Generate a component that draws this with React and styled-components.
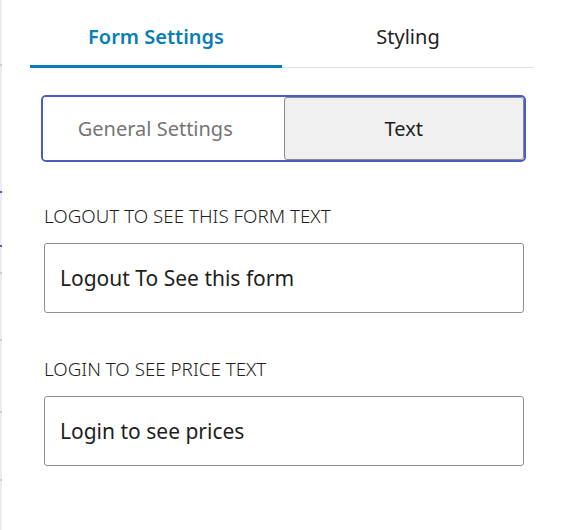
import React, { useState } from "react";
import styled, { createGlobalStyle } from "styled-components";

const Global = createGlobalStyle`
  html, body { margin: 0; padding: 0; background: #fff; }
  body { font-family: "Noto Sans", "Open Sans", sans-serif; color: #1e1e1e; }
`;

const Page = styled.div`
  display: flex;
  width: 561px;
  height: 530px;
  overflow: hidden;
`;

const Rail = styled.div`
  width: 2px;
  flex: none;
  background: #ececec;
  display: flex;
  flex-direction: column;
`;

const Tick = styled.span`
  display: block;
  height: 2px;
  margin-top: ${(p) => p.$gap}px;
  background: ${(p) => (p.$accent ? "#5b55c9" : "#d0d0d0")};
`;

const Panel = styled.div`
  width: 504px;
  margin-left: 28px;
  display: flex;
  flex-direction: column;
`;

const Tabs = styled.div`
  display: grid;
  grid-template-columns: 1fr 1fr;
  border-bottom: 1px solid #e2e2e2;
`;

const Tab = styled.button`
  all: unset;
  height: 68px;
  padding-top: 8px;
  box-sizing: border-box;
  text-align: center;
  font-size: 20px;
  font-weight: ${(p) => (p.$active ? 600 : 400)};
  color: ${(p) => (p.$active ? "#0a7db5" : "#222")};
  border-bottom: 3px solid ${(p) => (p.$active ? "#0a7db5" : "transparent")};
  margin-bottom: -1px;
  cursor: pointer;
`;

const Body = styled.div`
  padding: 27px 8px 0 11px;
  display: flex;
  flex-direction: column;
`;

const Segmented = styled.div`
  display: grid;
  grid-template-columns: 1fr 1fr;
  border: 2px solid #4a5cc4;
  border-radius: 5px;
  height: 67px;
  box-sizing: border-box;
  overflow: hidden;
  margin-bottom: 44px;
`;

const Segment = styled.button`
  all: unset;
  display: flex;
  align-items: center;
  justify-content: center;
  padding-right: ${(p) => (p.$active ? 0 : 16)}px;
  font-size: 20px;
  color: ${(p) => (p.$active ? "#1e1e1e" : "#757575")};
  background: ${(p) => (p.$active ? "#f0f0f0" : "#fff")};
  border: 1px solid ${(p) => (p.$active ? "#8a8a8a" : "transparent")};
  border-radius: ${(p) => (p.$active ? "3px" : "0")};
  cursor: pointer;
`;

const Field = styled.label`
  display: flex;
  flex-direction: column;
  padding: 0 2px 0 3px;
  margin-bottom: 46px;
`;

const Label = styled.span`
  font-size: 18.8px;
  font-weight: 300;
  text-transform: uppercase;
  color: #1e1e1e;
  line-height: 20px;
  margin-bottom: 17px;
`;

const Input = styled.input`
  box-sizing: border-box;
  height: 70px;
  width: 100%;
  border: 1px solid #8c8f94;
  border-radius: 3px;
  padding: 0 15px;
  font-family: inherit;
  font-size: 21px;
  color: #1e1e1e;
  outline: none;
`;

const fields = [
  { label: "Logout to see this form text", value: "Logout To See this form" },
  { label: "Login to see price text", value: "Login to see prices" },
];

export default function App() {
  const [tab, setTab] = useState(0);
  const [seg, setSeg] = useState(1);
  return (
    <Page>
      <Global />
      <Rail>
        <Tick $gap={64} />
        <Tick $gap={125} $accent />
        <Tick $gap={52} $accent />
        <Tick $gap={25} />
        <Tick $gap={65} />
        <Tick $gap={70} />
        <Tick $gap={66} />
      </Rail>
      <Panel>
        <Tabs>
          {["Form Settings", "Styling"].map((t, i) => (
            <Tab key={t} $active={tab === i} onClick={() => setTab(i)}>
              {t}
            </Tab>
          ))}
        </Tabs>
        <Body>
          <Segmented>
            {["General Settings", "Text"].map((s, i) => (
              <Segment key={s} $active={seg === i} onClick={() => setSeg(i)}>
                {s}
              </Segment>
            ))}
          </Segmented>
          {fields.map((f) => (
            <Field key={f.label}>
              <Label>{f.label}</Label>
              <Input defaultValue={f.value} />
            </Field>
          ))}
        </Body>
      </Panel>
    </Page>
  );
}
